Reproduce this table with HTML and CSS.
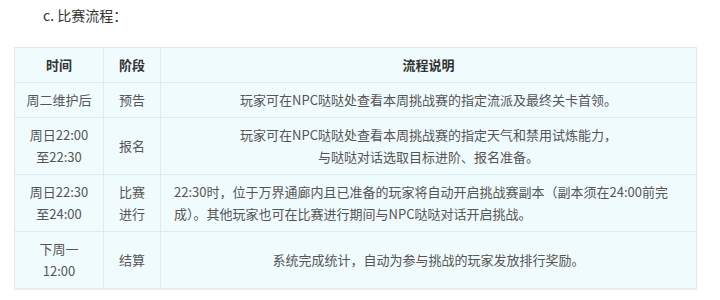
FILE: index.html
```html
<!DOCTYPE html>
<html lang="zh-CN">
<head>
<meta charset="utf-8">
<link rel="stylesheet" href="styles.css">
</head>
<body>
<div class="page">
  <p class="heading">c. 比赛流程：</p>
  <table class="flow">
    <colgroup>
      <col class="c-time">
      <col class="c-stage">
      <col class="c-desc">
    </colgroup>
    <thead>
      <tr><th>时间</th><th>阶段</th><th>流程说明</th></tr>
    </thead>
    <tbody>
      <tr><td>周二维护后</td><td>预告</td><td>玩家可在NPC哒哒处查看本周挑战赛的指定流派及最终关卡首领。</td></tr>
      <tr><td>周日22:00<br>至22:30</td><td>报名</td><td>玩家可在NPC哒哒处查看本周挑战赛的指定天气和禁用试炼能力，<br>与哒哒对话选取目标进阶、报名准备。</td></tr>
      <tr><td>周日22:30<br>至24:00</td><td>比赛<br>进行</td><td class="left">22:30时，位于万界通廊内且已准备的玩家将自动开启挑战赛副本（副本须在24:00前完成）。其他玩家也可在比赛进行期间与NPC哒哒对话开启挑战。</td></tr>
      <tr><td>下周一<br>12:00</td><td>结算</td><td>系统完成统计，自动为参与挑战的玩家发放排行奖励。</td></tr>
    </tbody>
  </table>
  <p class="heading next">d. 排行榜设置</p>
</div>
</body>
</html>
```
FILE: styles.css
```css
html, body {
  margin: 0;
  padding: 0;
  background: #ffffff;
}
body {
  font-family: "Noto Sans CJK SC", "Noto Sans", sans-serif;
  color: #555;
}
.page {
  padding: 4px 24px 0 14px;
}
.heading {
  margin: 0 0 21px 29px;
  font-size: 14px;
  line-height: 22px;
  color: #333;
}
.heading.next {
  margin-top: 6px;
}
.flow {
  width: 682px;
  border-collapse: collapse;
  table-layout: fixed;
  background: #f0fbfe;
  border: 1px solid #dfeaee;
  border-bottom: 2px solid #e6eef0;
  font-size: 13px;
  line-height: 22px;
}
.c-time { width: 89px; }
.c-stage { width: 57px; }
.c-desc { width: 536px; }
.flow th, .flow td {
  border: 1px solid #dfeaee;
  padding: 6px 8px;
  text-align: center;
  vertical-align: middle;
}
.flow th {
  font-weight: bold;
  color: #333;
}
.flow td.left {
  text-align: left;
  padding: 6px 12px 6px 13px;
}
```
